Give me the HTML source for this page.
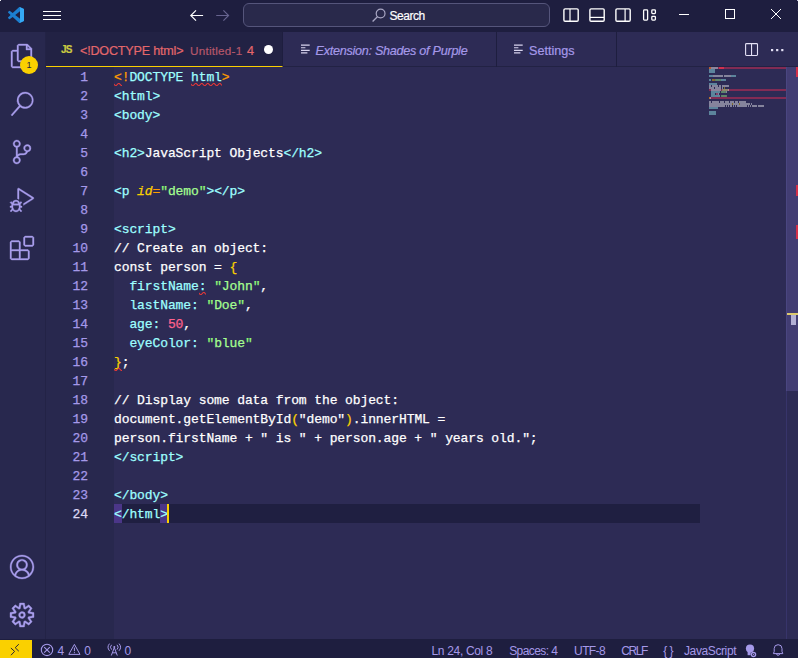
<!DOCTYPE html>
<html lang="en">
<head>
<meta charset="utf-8">
<title>Untitled-1 - Visual Studio Code</title>
<style>
*{box-sizing:border-box;margin:0;padding:0}
html,body{width:798px;height:658px;overflow:hidden;background:#2D2B55}
body{position:relative;font-family:"Liberation Sans",sans-serif;font-size:13px;color:#A599E9}
.abs{position:absolute}
#title{position:absolute;left:0;top:0;width:798px;height:32px;background:#1E1E3F}
#act{position:absolute;left:0;top:32px;width:46px;height:608px;background:#28284E;border-right:1px solid #232346}
#tabs{position:absolute;left:46px;top:32px;width:752px;height:35px;background:#2D2B55;border-bottom:1px solid #222244}
.tab{position:absolute;top:0;height:35px;border-right:1px solid #1E1E3F}
#tab1{left:0;width:237px;background:#222244;border-bottom:1px solid #FAD000}
#tab2{left:237px;width:214px}
#tab3{left:451px;width:120px}
.tl{position:absolute;white-space:pre;line-height:16px;-webkit-text-stroke:0.2px currentColor}
#gutter{position:absolute;left:46px;top:67px;width:68px;height:573px;background:#28284E}
#editor{position:absolute;left:114px;top:67px;width:672px;height:573px;background:#2D2B55}
#curline{position:absolute;left:114px;top:504px;width:586px;height:19px;background:#1F1F41}
.ln{position:absolute;left:46px;width:42px;text-align:right;height:19px;line-height:21px;-webkit-text-stroke:0.25px currentColor;font-family:"Liberation Mono",monospace;font-size:13px;letter-spacing:-0.1px;color:#A599E9}
.cl{position:absolute;left:114px;height:19px;line-height:21px;-webkit-text-stroke:0.25px currentColor;font-family:"Liberation Mono",monospace;font-size:13px;letter-spacing:-0.1px;white-space:pre;color:#fff}
.ln.act{color:#DDD9F4}
.w{color:#FFFFFF}.c{color:#9EFFFF}.o{color:#FF9D00}.y{color:#FAD000}.yi{color:#FAD000;font-style:italic}.g{color:#A5FF90}.q{color:#92FC79}.p{color:#FF628C}
.sq{position:absolute}
.bm{position:absolute;top:504px;width:8px;height:19px;background:#5B3FA0;opacity:.75}
#cursor{position:absolute;left:167px;top:504px;width:2px;height:19px;background:#FAD000}
#status{position:absolute;left:0;top:639px;width:798px;height:23px;background:#1E1E3F}
#status>*{margin-top:1px}
#remote{position:absolute;left:0;top:0;width:32px;height:22px;background:#FAD000}
.st{position:absolute;top:0;height:22px;line-height:22px;font-size:12px;white-space:pre;color:#A599E9}
#vscroll{position:absolute;left:786px;top:67px;width:12px;height:573px;background:#2D2B55;border-left:1px solid #37346A}
#slider{position:absolute;left:786px;top:67px;width:12px;height:324px;background:#423D73;border-left:1px solid #4A4681}
.mk{position:absolute;left:796px;width:2px;background:#D2304A}
svg{display:block;overflow:visible}
.sq{overflow:hidden}
</style>
</head>
<body>
<!-- TITLE BAR -->
<div id="title">
  <svg class="abs" style="left:8px;top:7px" width="16" height="16" viewBox="0 0 100 100">
    <path fill="#1C7FD0" fill-rule="evenodd" d="M70.912 99.317a6.223 6.223 0 0 0 4.960-.190l20.589-9.907A6.250 6.250 0 0 0 100 83.587V16.413a6.250 6.250 0 0 0-3.540-5.632L75.874.874a6.226 6.226 0 0 0-7.104 1.210L29.355 38.040 12.187 25.010a4.162 4.162 0 0 0-5.318.236l-5.506 5.009a4.168 4.168 0 0 0-.004 6.162L16.247 50 1.360 63.583a4.168 4.168 0 0 0 .004 6.162l5.506 5.010a4.162 4.162 0 0 0 5.318.236l17.168-13.032L68.770 97.917a6.217 6.217 0 0 0 2.143 1.400zM75.015 27.300L45.110 50l29.906 22.701V27.300z"/>
    <path fill="#35A9F5" d="M70.900 .700L75.900 .900L96.500 10.800Q100 12.500 100 16.400V83.600Q100 87.500 96.500 89.200L75.900 99.100L70.900 99.300Q75 97 75 93V7Q75 3 70.900 .700Z"/>
  </svg>
  <svg class="abs" style="left:43px;top:10px" width="18" height="11" viewBox="0 0 18 11">
    <path d="M0 1.5H18M0 5.5H18M0 9.5H18" stroke="#FFFFFF" stroke-width="1"/>
  </svg>
  <svg class="abs" style="left:190px;top:10px" width="14" height="12" viewBox="0 0 14 12">
    <path d="M13.1 5.5H0.8M6 0.3L0.8 5.5L6 10.7" fill="none" stroke="#FFFFFF" stroke-width="1.15"/>
  </svg>
  <svg class="abs" style="left:216px;top:10px" width="14" height="12" viewBox="0 0 14 12">
    <path d="M0.2 5.5H12.6M7.4 0.3L12.6 5.5L7.4 10.7" fill="none" stroke="#67648F" stroke-width="1.15"/>
  </svg>
  <div class="abs" style="left:243px;top:3px;width:307px;height:24px;border:1px solid #55557B;border-radius:6px;background:#29294B"></div>
  <svg class="abs" style="left:371.5px;top:8px" width="14" height="14" viewBox="0 0 14 14">
    <circle cx="8.6" cy="5.5" r="4.4" fill="none" stroke="#A9A7C4" stroke-width="1.2"/>
    <path d="M5.4 8.7L0.6 13.5" stroke="#A9A7C4" stroke-width="1.3"/>
  </svg>
  <div class="abs" style="left:389.5px;top:8px;font-size:12px;line-height:16px;color:#FFFFFF;letter-spacing:-0.45px;-webkit-text-stroke:0.2px #fff">Search</div>
  <!-- layout icons -->
  <svg class="abs" style="left:563px;top:8px" width="16" height="14" viewBox="0 0 16 14">
    <rect x="0.9" y="0.9" width="14.3" height="12.3" rx="1.2" fill="none" stroke="#FFFFFF" stroke-width="1.4"/><path d="M7 1V13" stroke="#FFFFFF" stroke-width="1.2"/>
  </svg>
  <svg class="abs" style="left:589.4px;top:8px" width="16" height="14" viewBox="0 0 16 14">
    <rect x="0.9" y="0.9" width="14.3" height="12.3" rx="1.2" fill="none" stroke="#FFFFFF" stroke-width="1.4"/><path d="M1 9.4H15" stroke="#FFFFFF" stroke-width="1.2"/>
  </svg>
  <svg class="abs" style="left:615.3px;top:8px" width="16" height="14" viewBox="0 0 16 14">
    <rect x="0.9" y="0.9" width="14.3" height="12.3" rx="1.2" fill="none" stroke="#FFFFFF" stroke-width="1.4"/><path d="M10.1 1V13" stroke="#FFFFFF" stroke-width="1.2"/>
  </svg>
  <svg class="abs" style="left:642px;top:8px" width="16" height="14" viewBox="0 0 16 14">
    <rect x="1.6" y="1.9" width="4" height="10.2" rx="0.8" fill="none" stroke="#FFFFFF" stroke-width="1.3"/>
    <rect x="9.8" y="1.9" width="3.6" height="3.7" rx="0.8" fill="none" stroke="#FFFFFF" stroke-width="1.3"/>
    <rect x="9.8" y="8.4" width="3.6" height="3.7" rx="0.8" fill="none" stroke="#FFFFFF" stroke-width="1.3"/>
  </svg>
  <!-- window controls -->
  <svg class="abs" style="left:679px;top:14px" width="10" height="1" viewBox="0 0 10 1"><rect width="10" height="1" fill="#FFFFFF"/></svg>
  <svg class="abs" style="left:725px;top:9px" width="10" height="10" viewBox="0 0 10 10"><rect x="0.5" y="0.5" width="9" height="9" fill="none" stroke="#FFFFFF" stroke-width="1"/></svg>
  <svg class="abs" style="left:771px;top:9px" width="10" height="10" viewBox="0 0 10 10"><path d="M0 0L10 10M10 0L0 10" stroke="#FFFFFF" stroke-width="1"/></svg>
</div>

<div class="abs" style="left:0;top:0;width:1px;height:1px;background:#F0F0F8"></div>
<div class="abs" style="left:797px;top:0;width:1px;height:1px;background:#C9C9E2"></div>
<!-- ACTIVITY BAR -->
<div id="act">
  <svg class="abs" style="left:10px;top:12px" width="24" height="24" viewBox="0 0 24 24"><path fill="#A89DEC" stroke="#A89DEC" stroke-width="0.35" d="M17.5 0h-9L7 1.5V6H2.5L1 7.500v15.070L2.500 24h12.070L16 22.570V18h4.700l1.300-1.430V4.500L17.500 0zm0 2.120l2.380 2.380H17.500V2.120zm-3 20.380h-12v-15H7v9.070L8.500 18h6v4.500zm6-6h-12v-15H16V6h4.500v10.500z"/></svg>
  <div class="abs" style="left:20px;top:24px;width:18px;height:18px;border-radius:9px;background:#FAD000;color:#1E1E3F;font-size:9px;line-height:18px;text-align:center">1</div>
  <svg class="abs" style="left:10px;top:60px" width="24" height="24" viewBox="0 0 24 24"><path fill="#A89DEC" stroke="#A89DEC" stroke-width="0.35" d="M15.250 0a8.250 8.250 0 0 0-6.180 13.720L1 22.880l1.120 1.120 8.050-9.120A8.251 8.251 0 1 0 15.250.010V0zm0 15a6.750 6.750 0 1 1 0-13.500 6.750 6.750 0 0 1 0 13.500z"/></svg>
  <svg class="abs" style="left:10px;top:108px" width="24" height="24" viewBox="0 0 24 24"><path fill="#A89DEC" stroke="#A89DEC" stroke-width="0.35" d="M21.007 8.222A3.738 3.738 0 0 0 15.045 5.200a3.737 3.737 0 0 0 1.156 6.583 2.988 2.988 0 0 1-2.668 1.670h-2.990a4.456 4.456 0 0 0-2.989 1.165V7.400a3.737 3.737 0 1 0-1.494 0v9.117a3.776 3.776 0 1 0 1.816.099 2.990 2.990 0 0 1 2.668-1.667h2.990a4.484 4.484 0 0 0 4.223-3.039 3.736 3.736 0 0 0 3.250-3.687zM4.565 3.738a2.242 2.242 0 1 1 4.484 0 2.242 2.242 0 0 1-4.484 0zm4.484 16.441a2.242 2.242 0 1 1-4.484 0 2.242 2.242 0 0 1 4.484 0zm8.221-9.715a2.242 2.242 0 1 1 0-4.485 2.242 2.242 0 0 1 0 4.485z"/></svg>
  <svg class="abs" style="left:10px;top:156px" width="24" height="24" viewBox="0 0 24 24"><path fill="#A89DEC" stroke="#A89DEC" stroke-width="0.35" d="M10.940 13.500l-1.320 1.320a3.730 3.730 0 0 0-7.240 0L1.060 13.500 0 14.560l1.720 1.720-.22.22V18H0v1.500h1.500v.080c.077.489.214.966.410 1.420L0 22.940 1.060 24l1.650-1.650A4.308 4.308 0 0 0 6 24a4.310 4.310 0 0 0 3.290-1.650L10.940 24 12 22.940 10.090 21c.198-.464.336-.951.410-1.450v-.1H12V18h-1.500v-1.500l-.22-.22L12 14.560l-1.060-1.060zM6 13.500a2.250 2.250 0 0 1 2.250 2.250h-4.500A2.250 2.250 0 0 1 6 13.500zm3 6a3.330 3.330 0 0 1-3 3 3.330 3.330 0 0 1-3-3v-2.250h6v2.250zm14.760-9.900v1.260L13.500 17.370V15.600l8.500-5.370L9 2v9.460a5.070 5.070 0 0 0-1.500-.72V.630L8.640 0l15.120 9.600z"/></svg>
  <svg class="abs" style="left:10px;top:204px" width="24" height="24" viewBox="0 0 24 24"><path fill="#A89DEC" stroke="#A89DEC" stroke-width="0.35" d="M13.500 1.500L15 0h7.500L24 1.500V9l-1.500 1.500H15L13.500 9V1.500zm1.500 0V9h7.500V1.500H15zM0 15V6l1.500-1.500H9L10.500 6v7.500H18l1.500 1.500v7.500L18 24H1.500L0 22.500V15zm9-1.500V6H1.500v7.500H9zM9 15H1.500v7.500H9V15zm1.500 7.500H18V15h-7.500v7.500z"/></svg>
  <svg class="abs" style="left:10px;top:523px" width="24" height="24" viewBox="0 0 16 16"><path fill="#A89DEC" stroke="#A89DEC" stroke-width="0.22" d="M16 7.992C16 3.580 12.416 0 8 0S0 3.580 0 7.992c0 2.430 1.104 4.620 2.832 6.090.016.016.032.016.032.032.144.112.288.224.448.336.080.048.144.111.224.175A7.980 7.980 0 0 0 8.016 16a7.980 7.980 0 0 0 4.480-1.375c.080-.048.144-.111.224-.160.144-.111.304-.223.448-.335.016-.016.032-.016.032-.032 1.696-1.487 2.800-3.676 2.800-6.106zm-8 7.001c-1.504 0-2.880-.480-4.016-1.279.016-.128.048-.255.080-.383a4.170 4.170 0 0 1 .416-.991c.176-.304.384-.576.640-.816.240-.240.528-.463.816-.639.304-.176.624-.304.976-.4A4.150 4.150 0 0 1 8 10.342a4.185 4.185 0 0 1 2.928 1.166c.368.368.656.800.864 1.295.112.288.192.592.240.911A7.030 7.030 0 0 1 8 14.993zm-2.448-7.400a2.490 2.490 0 0 1-.208-1.024c0-.351.064-.703.208-1.023.144-.320.336-.607.576-.847.240-.240.528-.431.848-.575.320-.144.672-.208 1.024-.208.368 0 .704.064 1.024.208.320.144.608.336.848.575.240.240.432.528.576.847.144.320.208.672.208 1.023 0 .368-.064.704-.208 1.023a2.840 2.840 0 0 1-.576.848 2.840 2.840 0 0 1-.848.575 2.715 2.715 0 0 1-2.064 0 2.840 2.840 0 0 1-.848-.575 2.526 2.526 0 0 1-.560-.848zm7.424 5.306c0-.032-.016-.048-.016-.080a5.220 5.220 0 0 0-.688-1.406 4.883 4.883 0 0 0-1.088-1.135 5.207 5.207 0 0 0-1.040-.608 2.820 2.820 0 0 0 .464-.383 4.200 4.200 0 0 0 .624-.784 3.624 3.624 0 0 0 .528-1.934 3.710 3.710 0 0 0-.288-1.470 3.799 3.799 0 0 0-.816-1.199 3.845 3.845 0 0 0-1.200-.800 3.720 3.720 0 0 0-1.472-.287 3.720 3.720 0 0 0-1.472.288 3.631 3.631 0 0 0-1.200.815 3.840 3.840 0 0 0-.800 1.199 3.710 3.710 0 0 0-.288 1.470c0 .352.048.688.144 1.007.096.336.224.640.4.927.160.288.384.544.624.784.144.144.304.271.480.383a5.120 5.120 0 0 0-1.040.624c-.416.320-.784.703-1.088 1.119a4.999 4.999 0 0 0-.688 1.406c-.16.032-.16.064-.16.080C1.776 11.636.992 9.910.992 7.992.992 4.140 4.144.991 8 .991s7.008 3.149 7.008 7.001a6.960 6.960 0 0 1-2.032 4.907z"/></svg>
  <svg class="abs" style="left:10px;top:571px" width="24" height="24" viewBox="0 0 24 24"><path fill="#A89DEC" stroke="#A89DEC" stroke-width="0.35" fill-rule="evenodd" d="M19.850 8.750l4.150.830v4.840l-4.150.830 2.350 3.520-3.430 3.430-3.520-2.350-.830 4.150H9.580l-.830-4.150-3.520 2.350-3.430-3.430 2.350-3.520L0 14.420V9.580l4.150-.830L1.800 5.230 5.230 1.800l3.520 2.350L9.580 0h4.840l.830 4.150 3.520-2.350 3.430 3.430-2.350 3.520zm-1.570 5.070l4-.810v-2l-4-.810-.540-1.300 2.290-3.430-1.430-1.430-3.430 2.290-1.300-.540-.810-4h-2l-.810 4-1.300.540-3.430-2.290-1.430 1.430L6.380 8.900l-.540 1.300-4 .810v2l4 .810.540 1.300-2.290 3.430 1.430 1.430 3.430-2.290 1.300.540.810 4h2l.810-4 1.300-.540 3.430 2.290 1.430-1.430-2.290-3.430.540-1.300zm-8.186-4.672A3.430 3.430 0 0 1 12 8.570 3.440 3.440 0 0 1 15.430 12a3.430 3.430 0 1 1-5.336-2.852zm.956 4.274c.281.188.612.288.950.288A1.700 1.700 0 0 0 13.710 12a1.710 1.710 0 1 0-2.660 1.422z"/></svg>

</div>

<!-- TABS -->
<div id="tabs">
  <div class="tab" id="tab1">
    <div class="tl" style="left:15px;top:10px;font-size:10px;font-weight:bold;color:#CBCB41;letter-spacing:-0.8px">JS</div>
    <div class="tl" style="left:34px;top:11px;font-size:12.6px;color:#E4676B;letter-spacing:-0.2px">&lt;!DOCTYPE html&gt;</div>
    <div class="tl" style="left:144px;top:11px;font-size:11.7px;color:#B5576A;letter-spacing:0.24px">Untitled-1</div>
    <div class="tl" style="left:201px;top:11px;font-size:12.6px;color:#E4676B">4</div>
    <div class="abs" style="left:217.5px;top:13.3px;width:9px;height:9px;border-radius:50%;background:#FFFFFF"></div>
  </div>
  <div class="tab" id="tab2">
    <svg class="abs" style="left:17.7px;top:12px" width="10" height="10" viewBox="0 0 10 10"><path d="M0 1.2H8.7M0 3.75H4.4M0 6.3H8.7M0 8.9H6.4" stroke="#D8D4EE" stroke-width="1.2"/></svg>
    <div class="tl" style="left:32.5px;top:11px;font-size:12.6px;font-style:italic;color:#A599E9;letter-spacing:-0.26px">Extension: Shades of Purple</div>
  </div>
  <div class="tab" id="tab3">
    <svg class="abs" style="left:16.9px;top:12px" width="10" height="10" viewBox="0 0 10 10"><path d="M0 1.2H8.7M0 3.75H4.4M0 6.3H8.7M0 8.9H6.4" stroke="#D8D4EE" stroke-width="1.2"/></svg>
    <div class="tl" style="left:32px;top:11px;font-size:12.6px;color:#A599E9">Settings</div>
  </div>
  <svg class="abs" style="left:699px;top:11px" width="13" height="13" viewBox="0 0 13 13"><rect x="0.6" y="0.6" width="11.9" height="11.9" rx="0.9" fill="none" stroke="#E4E1F6" stroke-width="1.1"/><path d="M6.55 0.6V12.4" stroke="#E4E1F6" stroke-width="1.1"/></svg>
  <svg class="abs" style="left:724.7px;top:17px" width="13" height="3" viewBox="0 0 13 3"><rect x="0" y="0" width="2.2" height="2.2" fill="#E4E1F6"/><rect x="5.1" y="0" width="2.2" height="2.2" fill="#E4E1F6"/><rect x="10.2" y="0" width="2.2" height="2.2" fill="#E4E1F6"/></svg>
</div>

<!-- EDITOR -->
<div id="gutter"></div>
<div id="editor"></div>
<div id="curline"></div>
<div class="bm" style="left:114px"></div>
<div class="bm" style="left:160px"></div>
<div class="ln" style="top:67px">1</div>
<div class="cl" style="top:67px"><span class="o">&lt;!</span><span class="c">DOCTYPE html</span><span class="o">&gt;</span></div>
<div class="ln" style="top:86px">2</div>
<div class="cl" style="top:86px"><span class="c">&lt;html&gt;</span></div>
<div class="ln" style="top:105px">3</div>
<div class="cl" style="top:105px"><span class="c">&lt;body&gt;</span></div>
<div class="ln" style="top:124px">4</div>
<div class="ln" style="top:143px">5</div>
<div class="cl" style="top:143px"><span class="c">&lt;h2&gt;</span><span class="w">JavaScript Objects</span><span class="c">&lt;/h2&gt;</span></div>
<div class="ln" style="top:162px">6</div>
<div class="ln" style="top:181px">7</div>
<div class="cl" style="top:181px"><span class="c">&lt;p </span><span class="yi">id</span><span class="o">=</span><span class="q">"</span><span class="g">demo</span><span class="q">"</span><span class="c">&gt;&lt;/p&gt;</span></div>
<div class="ln" style="top:200px">8</div>
<div class="ln" style="top:219px">9</div>
<div class="cl" style="top:219px"><span class="c">&lt;script&gt;</span></div>
<div class="ln" style="top:238px">10</div>
<div class="cl" style="top:238px"><span class="w">// Create an object:</span></div>
<div class="ln" style="top:257px">11</div>
<div class="cl" style="top:257px"><span class="w">const person = </span><span class="y">{</span></div>
<div class="ln" style="top:276px">12</div>
<div class="cl" style="top:276px"><span class="c">  firstName: </span><span class="q">"</span><span class="g">John</span><span class="q">"</span><span class="w">,</span></div>
<div class="ln" style="top:295px">13</div>
<div class="cl" style="top:295px"><span class="c">  lastName: </span><span class="q">"</span><span class="g">Doe</span><span class="q">"</span><span class="w">,</span></div>
<div class="ln" style="top:314px">14</div>
<div class="cl" style="top:314px"><span class="c">  age: </span><span class="p">50</span><span class="w">,</span></div>
<div class="ln" style="top:333px">15</div>
<div class="cl" style="top:333px"><span class="c">  eyeColor: </span><span class="q">"</span><span class="g">blue</span><span class="q">"</span></div>
<div class="ln" style="top:352px">16</div>
<div class="cl" style="top:352px"><span class="y">}</span><span class="w">;</span></div>
<div class="ln" style="top:371px">17</div>
<div class="ln" style="top:390px">18</div>
<div class="cl" style="top:390px"><span class="w">// Display some data from the object:</span></div>
<div class="ln" style="top:409px">19</div>
<div class="cl" style="top:409px"><span class="w">document.getElementById</span><span class="y">(</span><span class="w">"demo"</span><span class="y">)</span><span class="w">.innerHTML =</span></div>
<div class="ln" style="top:428px">20</div>
<div class="cl" style="top:428px"><span class="w">person.firstName + " is " + person.age + " years old.";</span></div>
<div class="ln" style="top:447px">21</div>
<div class="cl" style="top:447px"><span class="c">&lt;/script&gt;</span></div>
<div class="ln" style="top:466px">22</div>
<div class="ln" style="top:485px">23</div>
<div class="cl" style="top:485px"><span class="c">&lt;/body&gt;</span></div>
<div class="ln act" style="top:504px">24</div>
<div class="cl" style="top:504px"><span class="c">&lt;/html&gt;</span></div>
<svg class="sq" style="left:114.0px;top:83px;overflow:hidden" width="7.7" height="3" viewBox="0 0 7.7 3"><g fill="#EC3A37"><polygon points="5.5,0 2.5,3 1.1,3 4.1,0"/><polygon points="4,0 6,2 6,0.6 5.4,0"/><polygon points="0,2 1,3 2.4,3 0,0.6"/><polygon points="11.5,0 8.5,3 7.1,3 10.1,0"/><polygon points="10,0 12,2 12,0.6 11.4,0"/><polygon points="6,2 7,3 8.4,3 6,0.6"/></g></svg>
<svg class="sq" style="left:191.0px;top:83px;overflow:hidden" width="30.8" height="3" viewBox="0 0 30.8 3"><g fill="#EC3A37"><polygon points="5.5,0 2.5,3 1.1,3 4.1,0"/><polygon points="4,0 6,2 6,0.6 5.4,0"/><polygon points="0,2 1,3 2.4,3 0,0.6"/><polygon points="11.5,0 8.5,3 7.1,3 10.1,0"/><polygon points="10,0 12,2 12,0.6 11.4,0"/><polygon points="6,2 7,3 8.4,3 6,0.6"/><polygon points="17.5,0 14.5,3 13.1,3 16.1,0"/><polygon points="16,0 18,2 18,0.6 17.4,0"/><polygon points="12,2 13,3 14.4,3 12,0.6"/><polygon points="23.5,0 20.5,3 19.1,3 22.1,0"/><polygon points="22,0 24,2 24,0.6 23.4,0"/><polygon points="18,2 19,3 20.4,3 18,0.6"/><polygon points="29.5,0 26.5,3 25.1,3 28.1,0"/><polygon points="28,0 30,2 30,0.6 29.4,0"/><polygon points="24,2 25,3 26.4,3 24,0.6"/><polygon points="35.5,0 32.5,3 31.1,3 34.1,0"/><polygon points="34,0 36,2 36,0.6 35.4,0"/><polygon points="30,2 31,3 32.4,3 30,0.6"/></g></svg>
<svg class="sq" style="left:198.7px;top:292px;overflow:hidden" width="7.7" height="3" viewBox="0 0 7.7 3"><g fill="#EC3A37"><polygon points="5.5,0 2.5,3 1.1,3 4.1,0"/><polygon points="4,0 6,2 6,0.6 5.4,0"/><polygon points="0,2 1,3 2.4,3 0,0.6"/><polygon points="11.5,0 8.5,3 7.1,3 10.1,0"/><polygon points="10,0 12,2 12,0.6 11.4,0"/><polygon points="6,2 7,3 8.4,3 6,0.6"/></g></svg>
<svg class="sq" style="left:114.0px;top:368px;overflow:hidden" width="7.7" height="3" viewBox="0 0 7.7 3"><g fill="#EC3A37"><polygon points="5.5,0 2.5,3 1.1,3 4.1,0"/><polygon points="4,0 6,2 6,0.6 5.4,0"/><polygon points="0,2 1,3 2.4,3 0,0.6"/><polygon points="11.5,0 8.5,3 7.1,3 10.1,0"/><polygon points="10,0 12,2 12,0.6 11.4,0"/><polygon points="6,2 7,3 8.4,3 6,0.6"/></g></svg>
<div id="cursor"></div>
<svg class="abs" style="left:709px;top:67px" width="77" height="48" viewBox="0 0 77 48" shape-rendering="crispEdges"><rect x="0" y="0" width="77" height="2" fill="#822B54"/><rect x="0" y="22" width="77" height="2" fill="#822B54"/><rect x="0" y="30" width="77" height="2" fill="#822B54"/><rect x="0" y="0" width="2" height="2" fill="#FF9D00" opacity="0.42"/><rect x="2" y="0" width="7" height="2" fill="#9EFFFF" opacity="0.42"/><rect x="10" y="0" width="4" height="2" fill="#9EFFFF" opacity="0.42"/><rect x="14" y="0" width="1" height="2" fill="#FF9D00" opacity="0.42"/><rect x="0" y="2" width="6" height="2" fill="#9EFFFF" opacity="0.42"/><rect x="0" y="4" width="6" height="2" fill="#9EFFFF" opacity="0.42"/><rect x="0" y="8" width="4" height="2" fill="#9EFFFF" opacity="0.42"/><rect x="4" y="8" width="10" height="2" fill="#FFFFFF" opacity="0.42"/><rect x="15" y="8" width="7" height="2" fill="#FFFFFF" opacity="0.42"/><rect x="22" y="8" width="5" height="2" fill="#9EFFFF" opacity="0.42"/><rect x="0" y="12" width="2" height="2" fill="#9EFFFF" opacity="0.42"/><rect x="3" y="12" width="2" height="2" fill="#FAD000" opacity="0.42"/><rect x="5" y="12" width="1" height="2" fill="#FF9D00" opacity="0.42"/><rect x="6" y="12" width="1" height="2" fill="#92FC79" opacity="0.42"/><rect x="7" y="12" width="4" height="2" fill="#A5FF90" opacity="0.42"/><rect x="11" y="12" width="1" height="2" fill="#92FC79" opacity="0.42"/><rect x="12" y="12" width="5" height="2" fill="#9EFFFF" opacity="0.42"/><rect x="0" y="16" width="8" height="2" fill="#9EFFFF" opacity="0.42"/><rect x="0" y="18" width="2" height="2" fill="#FFFFFF" opacity="0.42"/><rect x="3" y="18" width="6" height="2" fill="#FFFFFF" opacity="0.42"/><rect x="10" y="18" width="2" height="2" fill="#FFFFFF" opacity="0.42"/><rect x="13" y="18" width="7" height="2" fill="#FFFFFF" opacity="0.42"/><rect x="0" y="20" width="5" height="2" fill="#FFFFFF" opacity="0.42"/><rect x="6" y="20" width="6" height="2" fill="#FFFFFF" opacity="0.42"/><rect x="13" y="20" width="1" height="2" fill="#FFFFFF" opacity="0.42"/><rect x="15" y="20" width="1" height="2" fill="#FAD000" opacity="0.42"/><rect x="2" y="22" width="10" height="2" fill="#9EFFFF" opacity="0.42"/><rect x="13" y="22" width="1" height="2" fill="#92FC79" opacity="0.42"/><rect x="14" y="22" width="4" height="2" fill="#A5FF90" opacity="0.42"/><rect x="18" y="22" width="1" height="2" fill="#92FC79" opacity="0.42"/><rect x="19" y="22" width="1" height="2" fill="#FFFFFF" opacity="0.42"/><rect x="2" y="24" width="9" height="2" fill="#9EFFFF" opacity="0.42"/><rect x="12" y="24" width="1" height="2" fill="#92FC79" opacity="0.42"/><rect x="13" y="24" width="3" height="2" fill="#A5FF90" opacity="0.42"/><rect x="16" y="24" width="1" height="2" fill="#92FC79" opacity="0.42"/><rect x="17" y="24" width="1" height="2" fill="#FFFFFF" opacity="0.42"/><rect x="2" y="26" width="4" height="2" fill="#9EFFFF" opacity="0.42"/><rect x="7" y="26" width="2" height="2" fill="#FF628C" opacity="0.42"/><rect x="9" y="26" width="1" height="2" fill="#FFFFFF" opacity="0.42"/><rect x="2" y="28" width="9" height="2" fill="#9EFFFF" opacity="0.42"/><rect x="12" y="28" width="1" height="2" fill="#92FC79" opacity="0.42"/><rect x="13" y="28" width="4" height="2" fill="#A5FF90" opacity="0.42"/><rect x="17" y="28" width="1" height="2" fill="#92FC79" opacity="0.42"/><rect x="0" y="30" width="1" height="2" fill="#FAD000" opacity="0.42"/><rect x="1" y="30" width="1" height="2" fill="#FFFFFF" opacity="0.42"/><rect x="0" y="34" width="2" height="2" fill="#FFFFFF" opacity="0.42"/><rect x="3" y="34" width="7" height="2" fill="#FFFFFF" opacity="0.42"/><rect x="11" y="34" width="4" height="2" fill="#FFFFFF" opacity="0.42"/><rect x="16" y="34" width="4" height="2" fill="#FFFFFF" opacity="0.42"/><rect x="21" y="34" width="4" height="2" fill="#FFFFFF" opacity="0.42"/><rect x="26" y="34" width="3" height="2" fill="#FFFFFF" opacity="0.42"/><rect x="30" y="34" width="7" height="2" fill="#FFFFFF" opacity="0.42"/><rect x="0" y="36" width="23" height="2" fill="#FFFFFF" opacity="0.42"/><rect x="23" y="36" width="1" height="2" fill="#FAD000" opacity="0.42"/><rect x="24" y="36" width="6" height="2" fill="#FFFFFF" opacity="0.42"/><rect x="30" y="36" width="1" height="2" fill="#FAD000" opacity="0.42"/><rect x="31" y="36" width="10" height="2" fill="#FFFFFF" opacity="0.42"/><rect x="42" y="36" width="1" height="2" fill="#FFFFFF" opacity="0.42"/><rect x="0" y="38" width="16" height="2" fill="#FFFFFF" opacity="0.42"/><rect x="17" y="38" width="1" height="2" fill="#FFFFFF" opacity="0.42"/><rect x="19" y="38" width="1" height="2" fill="#FFFFFF" opacity="0.42"/><rect x="21" y="38" width="2" height="2" fill="#FFFFFF" opacity="0.42"/><rect x="24" y="38" width="1" height="2" fill="#FFFFFF" opacity="0.42"/><rect x="26" y="38" width="1" height="2" fill="#FFFFFF" opacity="0.42"/><rect x="28" y="38" width="10" height="2" fill="#FFFFFF" opacity="0.42"/><rect x="39" y="38" width="1" height="2" fill="#FFFFFF" opacity="0.42"/><rect x="41" y="38" width="1" height="2" fill="#FFFFFF" opacity="0.42"/><rect x="43" y="38" width="5" height="2" fill="#FFFFFF" opacity="0.42"/><rect x="49" y="38" width="6" height="2" fill="#FFFFFF" opacity="0.42"/><rect x="0" y="40" width="9" height="2" fill="#9EFFFF" opacity="0.42"/><rect x="0" y="44" width="7" height="2" fill="#9EFFFF" opacity="0.42"/><rect x="0" y="46" width="7" height="2" fill="#9EFFFF" opacity="0.42"/><rect x="10" y="0" width="5" height="2" fill="#D0304F"/></svg>
<div id="vscroll"></div>
<div id="slider"></div>
<div class="mk" style="top:67px;height:10px"></div>
<div class="mk" style="top:185px;height:11px"></div>
<div class="mk" style="top:225px;height:14px"></div>
<div class="abs" style="left:787px;top:313px;width:11px;height:2px;background:#DCC96E"></div>
<div class="abs" style="left:791px;top:315px;width:5px;height:10px;background:#B2AFD4"></div>

<!-- STATUS BAR -->
<div id="status">
  <div id="remote"></div>
  <svg class="abs" style="left:0;top:0" width="32" height="22" viewBox="0 0 32 22"><path d="M10.9 8L14.6 11.4L11 15.2M18.8 4.2L15.2 7.7L18.8 11.2" fill="none" stroke="#2A2636" stroke-width="1"/></svg>
  <svg class="abs" style="left:40px;top:3.3px" width="14" height="14" viewBox="0 0 14 14"><circle cx="7" cy="6.9" r="5.7" fill="none" stroke="#A599E9" stroke-width="1.1"/><path d="M4.2 4.1L9.8 9.7M9.8 4.1L4.2 9.7" stroke="#A599E9" stroke-width="1.1"/></svg>
  <div class="st" id="s1" style="left:57.5px">4</div>
  <svg class="abs" style="left:68px;top:3.3px" width="13" height="13" viewBox="0 0 13 13"><path d="M6.4 1.4L12 11.4H0.8Z" fill="none" stroke="#A599E9" stroke-width="1" stroke-linejoin="round"/><path d="M6.4 4.6V8.2M6.4 9.1V10.2" stroke="#A599E9" stroke-width="1"/></svg>
  <div class="st" id="s2" style="left:84.2px">0</div>
  <svg class="abs" style="left:107px;top:3.3px" width="15" height="14" viewBox="0 0 15 14"><path d="M4.3 12.5L7.3 4.6L10.3 12.5M5.4 9.8H9.2" fill="none" stroke="#A599E9" stroke-width="1"/><circle cx="7.3" cy="4" r="1" fill="#A599E9"/><path d="M4.6 1.8A3.4 3.4 0 0 0 4.6 6.6M10 1.8A3.4 3.4 0 0 1 10 6.6M2.6 0.6A5.4 5.4 0 0 0 2.6 7.8M12 0.6A5.4 5.4 0 0 1 12 7.8" fill="none" stroke="#A599E9" stroke-width="1"/></svg>
  <div class="st" id="s3" style="left:124.5px">0</div>
  <div class="st" id="s4" style="left:431.5px;letter-spacing:-0.33px">Ln 24, Col 8</div>
  <div class="st" id="s5" style="left:509.2px;letter-spacing:-0.59px">Spaces: 4</div>
  <div class="st" id="s6" style="left:574.1px;letter-spacing:-0.62px">UTF-8</div>
  <div class="st" id="s7" style="left:621.3px;letter-spacing:-1.42px">CRLF</div>
  <div class="st" id="s8" style="left:663.2px;letter-spacing:-0.47px">{ }</div>
  <div class="st" id="s9" style="left:684.0px;letter-spacing:-0.39px">JavaScript</div>
  <svg class="abs" style="left:744px;top:3.6px" width="14" height="14" viewBox="0 0 14 14"><circle cx="6" cy="4.6" r="4.1" fill="#A599E9"/><path d="M3.6 7.5H6.6V11.2H3.6Z" fill="#A599E9"/><circle cx="9.5" cy="10.6" r="2.1" fill="#1E1E3F" stroke="#A599E9" stroke-width="1.3"/><circle cx="9.5" cy="10.6" r="0.7" fill="#A599E9"/></svg>
  <svg class="abs" style="left:771px;top:3px" width="14" height="14" viewBox="0 0 14 14"><path d="M2.4 10.6L3.2 8.6V5.6A3.9 3.9 0 0 1 11 5.6V8.6L11.8 10.6Z" fill="none" stroke="#A599E9" stroke-width="1" stroke-linejoin="round"/><path d="M5.6 10.8A1.5 1.5 0 0 0 8.6 10.8" fill="none" stroke="#A599E9" stroke-width="1"/></svg>

</div>
</body>
</html>
